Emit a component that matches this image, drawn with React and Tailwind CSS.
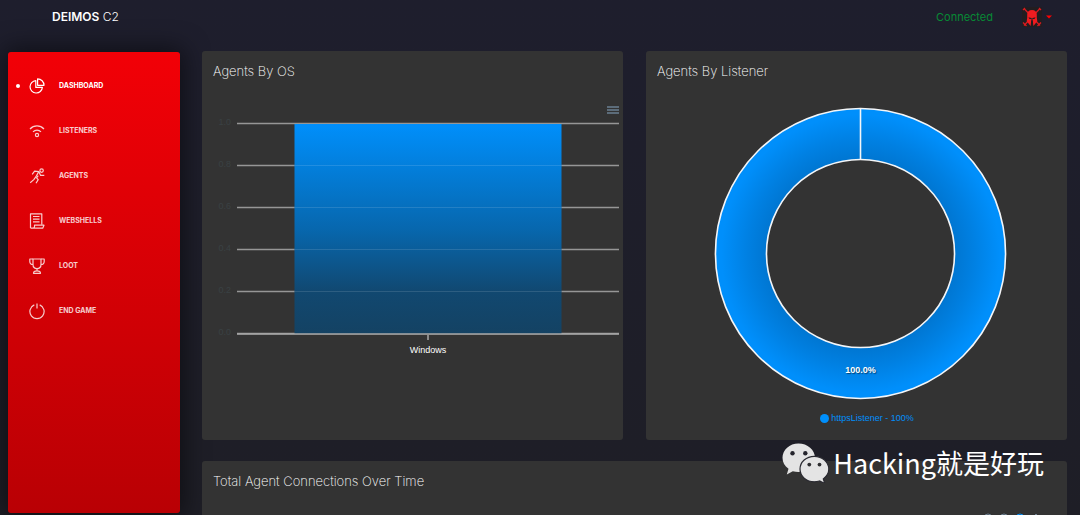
import React from "react";

const navItems = [
  {
    label: "Dashboard",
    active: true,
    icon: (
      <>
        <path d="M6.800 2.600A6.200 6.200 0 1 0 13.400 9.400H6.800z" />
        <path d="M8.600.900v6.400h6.400A6.400 6.400 0 0 0 8.600.9z" />
      </>
    ),
  },
  {
    label: "Listeners",
    icon: (
      <>
        <path d="M1 6a9.500 9.500 0 0 1 14 0" />
        <path d="M4 8.800a5.600 5.600 0 0 1 8 0" />
        <circle cx="8" cy="12" r="1.600" />
      </>
    ),
  },
  {
    label: "Agents",
    icon: (
      <>
        <circle cx="12.600" cy="2.600" r="1.700" />
        <path d="M3.200 6.300 5.600 3.200 9.800 3.600 6.600 9.200 4.800 11.600 1.200 14.800" />
        <path d="M9.800 3.600 11.600 7.400h3.700" />
        <path d="M9.200 7.600 7.600 9.800l1.600 1.800-2.200 3.600" />
      </>
    ),
  },
  {
    label: "Webshells",
    icon: (
      <>
        <path d="M1.500 15V.8h11.300v11" />
        <path d="M1.500 15.200h12.200l1.300-3H5.500v1.600c0 .8-.8 1.400-1.600 1.400" />
        <path d="M4 3.500h6.500M4 6.200h6.500M4 8.900h6.500" />
      </>
    ),
  },
  {
    label: "Loot",
    icon: (
      <>
        <path d="M4 1h8v5.500c0 2.500-1.600 4.200-4 4.200S4 9 4 6.500z" />
        <path d="M4 1H.800v2.400C.8 5.400 2 6.500 4 6.500M12 1h3.200v2.400c0 2-1.200 3.100-3.200 3.100" />
        <path d="M8 10.700v2.100M4.500 15.300c0-1.500 1.500-2.500 3.500-2.500s3.500 1 3.500 2.500z" />
      </>
    ),
  },
  {
    label: "End Game",
    icon: (
      <>
        <path d="M5.300 1.900a7.100 7.100 0 1 0 5.400 0" />
        <path d="M8 .5v5" />
      </>
    ),
  },
];

const gridLines = [
  { value: "1.0", y: 5 },
  { value: "0.8", y: 47 },
  { value: "0.6", y: 89 },
  { value: "0.4", y: 131 },
  { value: "0.2", y: 173 },
  { value: "0.0", y: 215 },
];

function Header() {
  return (
    <header className="mb-[17px] flex h-[34px] items-center justify-between pl-[52px] pr-[28px]">
      <a href="#home" className="text-[12px] font-light text-white">
        <b className="font-semibold">DEIMOS</b> C2
      </a>
      <div className="flex items-center">
        <span className="mr-[29px] text-[11px] text-[#078a35]">Connected</span>
        <button type="button" aria-label="Account" className="flex items-center gap-[4px]">
          <svg viewBox="0 0 20 20" className="size-[20px]" fill="#f01c20">
            <rect x="0" y="0" width="20" height="20" fill="#221d20" />
            <path
              d="M2 1.500 18 18.500M18 1.500 2 18.500M1 3l2-2M17 1l2 2M1 15.500l3.500 3.500M19 15.500 15.500 19"
              stroke="#d91a1f"
              strokeWidth="1.300"
              fill="none"
            />
            <path d="M10 3c-3 0-4.800 1.800-4.800 4.500v3.200l-.5 3.600 3.900 4.700.8-6.800-2.800-1.500 2.900.300L10 14l.5-3 2.900-.300-2.800 1.500.8 6.800 3.900-4.700-.5-3.600V7.500C14.800 4.800 13 3 10 3z" />
            <path d="M6.500 10.500l3 .5.100 1.300-2.300-.6zM13.500 10.500l-3 .5-.1 1.300 2.300-.6zM9.500 13.500h1V19h-1z" fill="#221d20" />
          </svg>
          <svg viewBox="0 0 6 4" className="h-[4px] w-[6px]" fill="#f00">
            <path d="M0 .5h6l-3 3z" />
          </svg>
        </button>
      </div>
    </header>
  );
}

function Sidebar() {
  return (
    <nav className="mb-[2px] ml-[8px] mt-px w-[172px] shrink-0 rounded-[3px] bg-linear-to-b from-[#f20007] to-[#b90004] pt-[11px] shadow-[0_0_24px_4px_rgba(0,0,0,0.5)]">
      <ul>
        {navItems.map((item) => (
          <li key={item.label}>
            <a
              href={"#" + item.label}
              className={
                "flex h-[45px] items-center text-[7px] font-bold uppercase text-white " +
                (item.active ? "" : "opacity-80")
              }
            >
              <span
                className={
                  "ml-[8px] mr-[9px] size-[4px] rounded-full " + (item.active ? "bg-white" : "")
                }
              />
              <svg
                viewBox="0 0 16 16"
                className="mr-[14px] size-[16px] overflow-visible"
                fill="none"
                stroke="currentColor"
                strokeWidth="1.200"
                strokeLinejoin="round"
              >
                {item.icon}
              </svg>
              <span className="leading-[9px]">{item.label}</span>
            </a>
          </li>
        ))}
      </ul>
    </nav>
  );
}

function Card({ title, className = "", children }) {
  return (
    <section className={"rounded-[3px] bg-[#333333] pt-[10px] " + className}>
      <h2 className="px-[11px] text-[13px] font-extralight leading-[20px] text-white">{title}</h2>
      {children}
    </section>
  );
}

function OsChart() {
  return (
    <>
      <div className="mt-[21px] flex justify-end pr-[4px]">
        <button type="button" aria-label="Chart menu" className="flex h-[16px] w-[12px] flex-col justify-center gap-px">
          <span className="h-[2px] w-full bg-[#5c6c7a]" />
          <span className="h-[2px] w-full bg-[#5c6c7a]" />
          <span className="h-[2px] w-full bg-[#5c6c7a]" />
        </button>
      </div>
      <svg viewBox="0 0 421 245" className="w-full" role="img" aria-label="Agents by operating system">
        <defs>
          <linearGradient id="bar" x1="0" y1="0" x2="0" y2="1">
            <stop offset="0" stopColor="#008ffb" />
            <stop offset="0.500" stopColor="#0767ae" />
            <stop offset="0.800" stopColor="#114870" />
            <stop offset="1" stopColor="#144263" />
          </linearGradient>
        </defs>
        {gridLines.map((line) => (
          <g key={line.value}>
            <text x="29" y={line.y + 2} textAnchor="end" fill="#3a4143" className="font-['Liberation_Sans'] text-[9px]">
              {line.value}
            </text>
            <path d={`M35 ${line.y + 0.5}H417`} stroke="#969696" strokeWidth="1.300" />
          </g>
        ))}
        <rect x="92.500" y="6" width="267" height="210" fill="url(#bar)" />
        {gridLines.slice(1, 5).map((line) => (
          <path key={line.value} d={`M93 ${line.y + 0.5}H359`} stroke="#fff" strokeOpacity="0.120" />
        ))}
        <path d="M35 216H417M226 217v5" stroke="#a8a8a8" strokeWidth="1.500" />
        <text x="226" y="235" textAnchor="middle" fill="#fff" className="font-['Liberation_Sans'] text-[9px]">
          Windows
        </text>
      </svg>
    </>
  );
}

function ListenerChart() {
  return (
    <>
      <svg viewBox="0 0 421 310" className="mt-[17px] w-full" role="img" aria-label="Agents by listener">
        <defs>
          <radialGradient id="ring" gradientUnits="userSpaceOnUse" cx="214.500" cy="155.500" r="145">
            <stop offset="0.620" stopColor="#0074ce" />
            <stop offset="0.780" stopColor="#0080e2" />
            <stop offset="0.960" stopColor="#008ffb" />
          </radialGradient>
        </defs>
        <path
          fillRule="evenodd"
          d="M214.500 10.500a145 145 0 1 1 0 290a145 145 0 1 1 0-290zM214.500 61.500a94 94 0 1 0 0 188a94 94 0 1 0 0-188z"
          fill="url(#ring)"
          stroke="#f4f6f8"
          strokeWidth="1.600"
        />
        <path d="M214.500 10.500v51" stroke="#f4f6f8" strokeWidth="1.600" />
        <text
          x="214.500"
          y="275"
          textAnchor="middle"
          fill="#fff"
          className="font-['Liberation_Sans'] text-[9px] font-bold [text-shadow:1px_1px_1px_rgba(0,0,0,0.5)]"
        >
          100.0%
        </text>
      </svg>
      <div className="flex h-[20px] items-center justify-center gap-[2px] pl-[21px] font-['Liberation_Sans'] text-[9px] text-[#008ffb]">
        <span className="size-[9px] rounded-full bg-[#008ffb]" />
        <span className="pt-px">httpsListener - 100%</span>
      </div>
    </>
  );
}

function Toolbar() {
  return (
    <div className="mt-[22px] flex justify-end gap-[6px] pr-[26px]">
      {["Zoom in", "Zoom out", "Selection zoom", "Reset"].map((label) => (
        <button key={label} type="button" aria-label={label}>
          <svg
            viewBox="0 0 10 10"
            className={"size-[10px] " + (label === "Selection zoom" ? "text-[#008ffb]" : "text-[#6e8192]")}
            fill="none"
            stroke="currentColor"
          >
            {label === "Reset" ? (
              <path d="M5 1 9 5H8v4H2V5H1z" />
            ) : (
              <>
                <circle cx="5" cy="5" r="4" />
                <path d="M3 5h4" />
              </>
            )}
          </svg>
        </button>
      ))}
    </div>
  );
}

function Watermark() {
  return (
    <div className="absolute bottom-[32px] right-[36px] flex items-center gap-[4px]">
      <svg viewBox="0 0 47 40" className="h-[40px] w-[47px]" fill="#e4e4e4">
        <path d="M16.500.5C7.500.5.5 6.800.5 14.800c0 4.500 2.200 8.300 6 11L4.800 31.500l6-3.200c1.800.5 3.700.8 5.700.8 9 0 16.500-6.300 16.500-14.300S25.500.5 16.500.5z" />
        <ellipse cx="10.500" cy="10.200" rx="2.200" ry="2.300" fill="#25252d" />
        <ellipse cx="23.300" cy="10.200" rx="2.200" ry="2.300" fill="#25252d" />
        <path
          d="M32.300 13.300c-8 0-14.300 5.700-14.300 12.800s6.300 12.700 14.300 12.700c1.900 0 3.600-.3 5.200-.8l5.300 2.500-1.500-4.600c3.300-2.300 5.500-5.800 5.500-9.800 0-7.100-6.500-12.800-14.500-12.800z"
          stroke="#292930"
          strokeWidth="1.200"
        />
        <circle cx="27.300" cy="21.600" r="1.900" fill="#2e2e30" />
        <circle cx="37.500" cy="21.600" r="1.900" fill="#2e2e30" />
      </svg>
      <span className="font-['Noto_Sans_CJK_SC',sans-serif] text-[27px] leading-[40px] text-white">
        Hacking就是好玩
      </span>
    </div>
  );
}

export default function App() {
  return (
    <div className="relative flex h-screen flex-col overflow-hidden bg-linear-to-b from-[#1e1e2d] to-[#1e1e26] font-['Inter',sans-serif]">
      <Header />
      <div className="flex min-h-0 flex-1">
        <Sidebar />
        <main className="ml-[22px] mr-[13px] min-w-0 flex-1">
          <div className="mb-[21px] grid grid-cols-2 gap-[23px]">
            <Card title="Agents By OS">
              <OsChart />
            </Card>
            <Card title="Agents By Listener" className="pb-[12px]">
              <ListenerChart />
            </Card>
          </div>
          <Card title="Total Agent Connections Over Time" className="pb-[200px]">
            <Toolbar />
          </Card>
        </main>
      </div>
      <Watermark />
    </div>
  );
}
